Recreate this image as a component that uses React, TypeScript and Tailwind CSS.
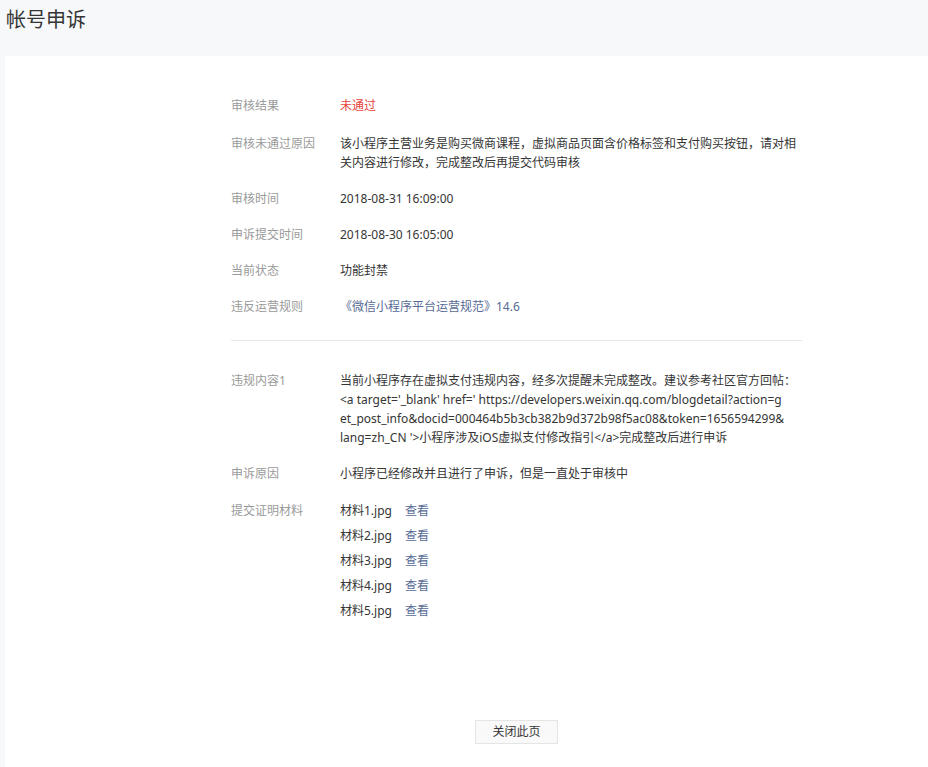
import React from 'react'

const font = { fontFamily: '"Noto Sans", "Noto Sans CJK SC", sans-serif' }

interface RowProps {
  label: string
  children: React.ReactNode
  className?: string
}

function Row({ label, children, className = 'mb-[17px]' }: RowProps) {
  return (
    <div className={`flex text-[12px] leading-[19px] ${className}`}>
      <div className="w-[109px] shrink-0 text-[#9a9a9a]">{label}</div>
      <div className="flex-1 text-[#353535]">{children}</div>
    </div>
  )
}

const materials = ['材料1.jpg', '材料2.jpg', '材料3.jpg', '材料4.jpg', '材料5.jpg']

export default function App() {
  return (
    <div className="min-h-screen bg-[#f6f8f9]" style={font}>
      {/* Page title */}
      <div className="h-[56px] pl-[6px] pt-[6px]">
        <h1 className="text-[20px] leading-[28px] text-[#353535]">帐号申诉</h1>
      </div>

      {/* Card */}
      <div className="ml-[5px] bg-white min-h-[711px] pt-[40px] pb-[23px]">
        <div className="ml-[226px] w-[571px]">
          <Row label="审核结果" className="mb-[19px]">
            <span className="text-[#e64340]">未通过</span>
          </Row>
          <Row label="审核未通过原因">
            该小程序主营业务是购买微商课程，虚拟商品页面含价格标签和支付购买按钮，请对相
            <br />
            关内容进行修改，完成整改后再提交代码审核
          </Row>
          <Row label="审核时间">2018-08-31 16:09:00</Row>
          <Row label="申诉提交时间">2018-08-30 16:05:00</Row>
          <Row label="当前状态">功能封禁</Row>
          <Row label="违反运营规则" className="mb-0">
            <a className="text-[#576b95]">《微信小程序平台运营规范》14.6</a>
          </Row>

          <div className="mt-[24px] mb-[30px] h-px bg-[#e7e7eb]" />

          <Row label="违规内容1">
            <div className="whitespace-nowrap">
              当前小程序存在虚拟支付违规内容，经多次提醒未完成整改。建议参考社区官方回帖：
              <br />
              {"<a target='_blank' href=' https://developers.weixin.qq.com/blogdetail?action=g"}
              <br />
              et_post_info&amp;docid=000464b5b3cb382b9d372b98f5ac08&amp;token=1656594299&amp;
              <br />
              {"lang=zh_CN '>小程序涉及iOS虚拟支付修改指引</a>完成整改后进行申诉"}
            </div>
          </Row>
          <Row label="申诉原因" className="mb-[18px]">
            小程序已经修改并且进行了申诉，但是一直处于审核中
          </Row>
          <Row label="提交证明材料" className="mb-0">
            <div className="flex flex-col gap-[6px]">
              {materials.map((m) => (
                <div key={m} className="flex gap-[13px]">
                  <span>{m}</span>
                  <a className="text-[#576b95]">查看</a>
                </div>
              ))}
            </div>
          </Row>

          {/* Footer button */}
          <div className="mt-[100px] flex justify-center">
            <button className="h-[24px] w-[83px] border border-[#e5e5e5] bg-[#f9f9f9] text-[12px] text-[#353535] leading-[22px]">
              关闭此页
            </button>
          </div>
        </div>
      </div>
    </div>
  )
}
